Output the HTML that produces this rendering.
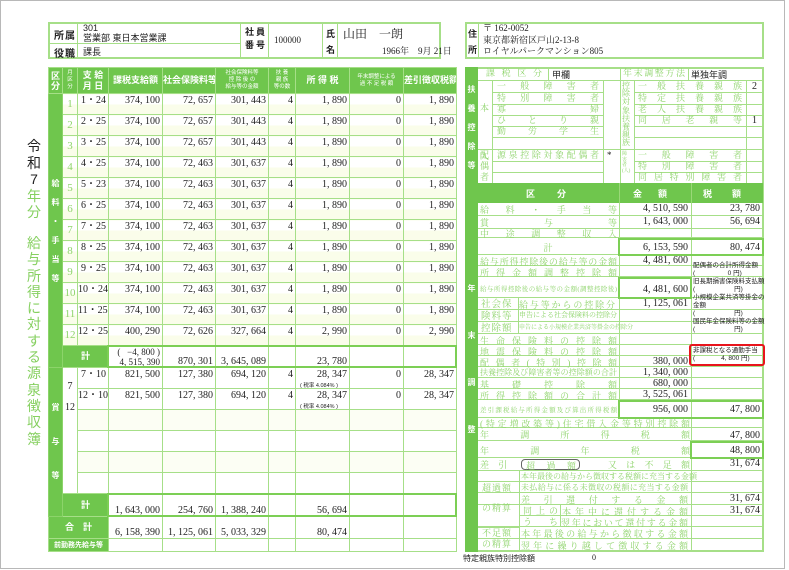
<!DOCTYPE html>
<html><head><meta charset="utf-8">
<style>
*{margin:0;padding:0;box-sizing:border-box}
body{width:789px;height:570px;background:#fff;position:relative;overflow:hidden;font-family:"Liberation Serif","Noto Serif CJK SC",serif;color:#222}
.frame{position:absolute;left:0;top:0;width:785px;height:569px;border:1px solid #b8b8b8}
.a{position:absolute}
.g{color:#8fd46c}
.hb{position:absolute;border:1px solid #a6df88}
.gl{background:#6fc64d;color:#fff}
table{border-collapse:collapse;table-layout:fixed;position:absolute}
td{border:1px solid #a6df88;font-size:10px;vertical-align:top;text-align:right;padding:1px 2px 0 0;white-space:nowrap;overflow:hidden;line-height:11px}
td.h{background:#6fc64d;color:#fff;text-align:center;vertical-align:middle;font-family:"Liberation Sans","Noto Sans CJK JP",sans-serif;font-size:9px;padding:0;font-weight:bold}
td.hs{font-size:5.5px;line-height:7px;font-weight:normal}
td.m{color:#8fd46c;text-align:center;vertical-align:middle;padding:0;font-size:11px;background:#fff}
tr.r td{background:linear-gradient(#fff 50%,#fafdea 50%)}
td.grn{background:#6fc64d!important;border-color:#8cd46a}
.thick{position:absolute;border:2px solid #7ccf55}
.rw{position:absolute;left:478px;width:285px;border-bottom:1px solid #a6df88;font-size:9px}
.rw .l{position:absolute;left:2px;width:137px;top:0;color:#8fd46c;text-align:justify;text-align-last:justify;font-family:"Liberation Serif","Noto Serif CJK JP",serif;white-space:nowrap}
.rw .v1{position:absolute;left:141px;width:72px;border-left:1px solid #a6df88;height:100%;text-align:right;padding-right:3px;font-size:10px}
.rw .v2{position:absolute;left:213px;width:72px;border-left:1px solid #a6df88;height:100%;text-align:right;padding-right:3px;font-size:10px}
.tl{position:absolute;color:#8fd46c;font-size:9px;text-align:justify;text-align-last:justify;white-space:nowrap;line-height:11px}
.ln{position:absolute;background:#a6df88}
.note{position:absolute;left:693px;font-family:"Liberation Sans","Noto Sans CJK JP",sans-serif;font-size:6.5px;line-height:8px;color:#222}
</style></head><body>
<div class="frame"></div>

<!-- header box -->
<div class="hb" style="left:48px;top:22px;width:393px;height:37px;border-width:2px"></div>
<div class="hb" style="left:465px;top:22px;width:299px;height:37px;border-width:2px"></div>
<div class="ln" style="left:48px;top:43px;width:192px;height:1px"></div>
<div class="ln" style="left:77px;top:22px;width:1px;height:37px"></div>
<div class="ln" style="left:240px;top:22px;width:1px;height:37px"></div>
<div class="ln" style="left:268px;top:22px;width:1px;height:37px"></div>
<div class="ln" style="left:322px;top:22px;width:1px;height:37px"></div>
<div class="ln" style="left:337px;top:22px;width:1px;height:37px"></div>
<div class="ln" style="left:478px;top:22px;width:1px;height:37px"></div>
<div class="a" style="left:54px;top:27px;font-size:10px;font-family:'Liberation Sans','Noto Sans CJK JP',sans-serif;font-weight:bold;letter-spacing:1px">所属</div>
<div class="a" style="left:54px;top:45px;font-size:10px;font-family:'Liberation Sans','Noto Sans CJK JP',sans-serif;font-weight:bold;letter-spacing:1px">役職</div>
<div class="a" style="left:83px;top:23px;font-size:9px;line-height:10px;font-family:'Liberation Sans','Noto Sans CJK JP',sans-serif">301<br>営業部 東日本営業課</div>
<div class="a" style="left:83px;top:45px;font-size:9px;font-family:'Liberation Sans','Noto Sans CJK JP',sans-serif">課長</div>
<div class="a" style="left:245px;top:26px;font-size:9px;line-height:13px;font-family:'Liberation Sans','Noto Sans CJK JP',sans-serif;font-weight:bold;letter-spacing:2px">社員<br>番号</div>
<div class="a" style="left:274px;top:35px;font-size:9px">100000</div>
<div class="a" style="left:326px;top:26px;font-size:9px;line-height:16px;font-family:'Liberation Sans','Noto Sans CJK JP',sans-serif;font-weight:bold">氏<br>名</div>
<div class="a" style="left:343px;top:25px;font-size:12px;font-family:'Liberation Serif','Noto Serif CJK JP',serif">山田　一朗</div>
<div class="a" style="left:382px;top:44px;font-size:9px;font-family:'Liberation Serif','Noto Serif CJK JP',serif">1966年　9月 21日</div>
<div class="a" style="left:468px;top:26px;font-size:9px;line-height:16px;font-family:'Liberation Sans','Noto Sans CJK JP',sans-serif;font-weight:bold">住<br>所</div>
<div class="a" style="left:483px;top:23px;font-size:9px;line-height:11.5px;font-family:'Liberation Serif','Noto Serif CJK JP',serif">〒 162-0052<br>東京都新宿区戸山2-13-8<br>ロイヤルパークマンション805</div>

<!-- title -->
<div class="a" style="left:26px;top:138px;width:16px;font-size:14px;line-height:16.5px;text-align:center;font-family:'Liberation Sans','Noto Sans CJK JP',sans-serif">令<br>和<br>7<br><span style="color:#86d060">年<br>分</span></div>
<div class="a" style="left:26px;top:235px;width:16px;font-size:14px;line-height:16.3px;text-align:center;font-family:'Liberation Sans','Noto Sans CJK JP',sans-serif;color:#86d060">給<br>与<br>所<br>得<br>に<br>対<br>す<br>る<br>源<br>泉<br>徴<br>収<br>簿</div>

<!-- left table -->
<table style="left:48px;top:67px;width:408px">
<colgroup><col style="width:14px"><col style="width:15px"><col style="width:31px"><col style="width:54px"><col style="width:53px"><col style="width:53px"><col style="width:27px"><col style="width:54px"><col style="width:54px"><col style="width:53px"></colgroup>
<tr style="height:26px"><td class="h" style="font-size:9px;line-height:10px">区<br>分</td><td class="h hs">月<br>区<br>分</td><td class="h" style="font-size:9px;line-height:11px">支 給<br>月 日</td><td class="h">課税支給額</td><td class="h">社会保険料等</td><td class="h hs">社会保険料等<br>控 除 後 の<br>給与等の金額</td><td class="h hs">扶 養<br>親 族<br>等の数</td><td class="h">所 得 税</td><td class="h hs">年末調整による<br>過 不 足 税 額</td><td class="h">差引徴収税額</td></tr>
<tr class="r" style="height:21px"><td class="grn h" rowspan="13" style="vertical-align:middle;font-size:8px;line-height:19px">給<br>料<br>・<br>手<br>当<br>等</td><td class="m">1</td><td>1・24</td><td>374, 100</td><td>72, 657</td><td>301, 443</td><td>4</td><td>1, 890</td><td>0</td><td>1, 890</td></tr>
<tr class="r" style="height:21px"><td class="m">2</td><td>2・25</td><td>374, 100</td><td>72, 657</td><td>301, 443</td><td>4</td><td>1, 890</td><td>0</td><td>1, 890</td></tr>
<tr class="r" style="height:21px"><td class="m">3</td><td>3・25</td><td>374, 100</td><td>72, 657</td><td>301, 443</td><td>4</td><td>1, 890</td><td>0</td><td>1, 890</td></tr>
<tr class="r" style="height:21px"><td class="m">4</td><td>4・25</td><td>374, 100</td><td>72, 463</td><td>301, 637</td><td>4</td><td>1, 890</td><td>0</td><td>1, 890</td></tr>
<tr class="r" style="height:21px"><td class="m">5</td><td>5・23</td><td>374, 100</td><td>72, 463</td><td>301, 637</td><td>4</td><td>1, 890</td><td>0</td><td>1, 890</td></tr>
<tr class="r" style="height:21px"><td class="m">6</td><td>6・25</td><td>374, 100</td><td>72, 463</td><td>301, 637</td><td>4</td><td>1, 890</td><td>0</td><td>1, 890</td></tr>
<tr class="r" style="height:21px"><td class="m">7</td><td>7・25</td><td>374, 100</td><td>72, 463</td><td>301, 637</td><td>4</td><td>1, 890</td><td>0</td><td>1, 890</td></tr>
<tr class="r" style="height:21px"><td class="m">8</td><td>8・25</td><td>374, 100</td><td>72, 463</td><td>301, 637</td><td>4</td><td>1, 890</td><td>0</td><td>1, 890</td></tr>
<tr class="r" style="height:21px"><td class="m">9</td><td>9・25</td><td>374, 100</td><td>72, 463</td><td>301, 637</td><td>4</td><td>1, 890</td><td>0</td><td>1, 890</td></tr>
<tr class="r" style="height:21px"><td class="m">10</td><td>10・24</td><td>374, 100</td><td>72, 463</td><td>301, 637</td><td>4</td><td>1, 890</td><td>0</td><td>1, 890</td></tr>
<tr class="r" style="height:21px"><td class="m">11</td><td>11・25</td><td>374, 100</td><td>72, 463</td><td>301, 637</td><td>4</td><td>1, 890</td><td>0</td><td>1, 890</td></tr>
<tr class="r" style="height:21px"><td class="m">12</td><td>12・25</td><td>400, 290</td><td>72, 626</td><td>327, 664</td><td>4</td><td>2, 990</td><td>0</td><td>2, 990</td></tr>
<tr style="height:22px"><td class="h" colspan="2">計</td><td style="font-size:9px;line-height:10px;vertical-align:bottom">( &nbsp; −4, 800 )<br>4, 515, 390</td><td style="vertical-align:bottom">870, 301</td><td style="vertical-align:bottom">3, 645, 089</td><td></td><td style="vertical-align:bottom">23, 780</td><td></td><td></td></tr>
<tr style="height:21px"><td class="grn h" rowspan="7" style="vertical-align:middle;font-size:8px;line-height:34px">賞<br>与<br>等</td><td rowspan="6" style="text-align:center;padding:0;line-height:21px;vertical-align:top;padding-top:8px">7<br>12</td><td>7・10</td><td>821, 500</td><td>127, 380</td><td>694, 120</td><td>4</td><td>28, 347</td><td>0</td><td>28, 347</td></tr>
<tr style="height:21px"><td>12・10</td><td>821, 500</td><td>127, 380</td><td>694, 120</td><td>4</td><td>28, 347</td><td>0</td><td>28, 347</td></tr>
<tr style="height:21px;background:#fcfef4"><td></td><td></td><td></td><td></td><td></td><td></td><td></td><td></td></tr>
<tr style="height:21px"><td></td><td></td><td></td><td></td><td></td><td></td><td></td><td></td></tr>
<tr style="height:21px;background:#fcfef4"><td></td><td></td><td></td><td></td><td></td><td></td><td></td><td></td></tr>
<tr style="height:21px"><td></td><td></td><td></td><td></td><td></td><td></td><td></td><td></td></tr>
<tr style="height:23px"><td class="h" colspan="2">計</td><td style="vertical-align:bottom">1, 643, 000</td><td style="vertical-align:bottom">254, 760</td><td style="vertical-align:bottom">1, 388, 240</td><td></td><td style="vertical-align:bottom">56, 694</td><td></td><td></td></tr>
<tr style="height:22px"><td class="h" colspan="3">合　計</td><td style="vertical-align:bottom">6, 158, 390</td><td style="vertical-align:bottom">1, 125, 061</td><td style="vertical-align:bottom">5, 033, 329</td><td></td><td style="vertical-align:bottom">80, 474</td><td></td><td></td></tr>
<tr style="height:13px"><td class="h" colspan="3" style="font-size:7px">前勤務先給与等</td><td></td><td></td><td></td><td></td><td></td><td></td><td></td></tr>
</table>
<div class="a" style="left:300px;top:381px;font-size:5.5px;font-family:'Liberation Sans','Noto Sans CJK JP',sans-serif">( 税率 4.084% )</div>
<div class="a" style="left:300px;top:402px;font-size:5.5px;font-family:'Liberation Sans','Noto Sans CJK JP',sans-serif">( 税率 4.084% )</div>
<div class="thick" style="left:107px;top:345px;width:350px;height:23px"></div>
<div class="thick" style="left:107px;top:493px;width:350px;height:24px"></div>

<!-- right table -->
<div class="hb" style="left:465px;top:67px;width:299px;height:485px;border-width:2px"></div>
<div class="a gl" style="left:465px;top:67px;width:13px;height:485px"></div>
<div class="a" style="left:465px;top:80px;width:13px;font-size:8px;line-height:19px;color:#fff;text-align:center;font-family:'Liberation Sans','Noto Sans CJK JP',sans-serif;font-weight:bold">扶<br>養<br>控<br>除<br>等</div>
<div class="a" style="left:465px;top:265px;width:13px;font-size:8px;line-height:47px;color:#fff;text-align:center;font-family:'Liberation Sans','Noto Sans CJK JP',sans-serif;font-weight:bold">年<br>末<br>調<br>整</div>

<!-- top section lines -->
<div class="ln" style="left:478px;top:80px;width:285px;height:1px"></div>
<div class="ln" style="left:548px;top:67px;width:1px;height:13px"></div>
<div class="ln" style="left:620px;top:67px;width:1px;height:116px"></div>
<div class="ln" style="left:688px;top:67px;width:1px;height:13px"></div>
<div class="ln" style="left:492px;top:80px;width:1px;height:103px"></div>
<div class="ln" style="left:603px;top:80px;width:1px;height:103px"></div>
<div class="ln" style="left:634px;top:80px;width:1px;height:103px"></div>
<div class="ln" style="left:746px;top:80px;width:1px;height:103px"></div>
<div class="ln" style="left:478px;top:149px;width:285px;height:1px"></div>
<div class="ln" style="left:492px;top:92px;width:111px;height:1px"></div>
<div class="ln" style="left:492px;top:104px;width:111px;height:1px"></div>
<div class="ln" style="left:492px;top:115px;width:111px;height:1px"></div>
<div class="ln" style="left:492px;top:126px;width:111px;height:1px"></div>
<div class="ln" style="left:492px;top:137px;width:111px;height:1px"></div>
<div class="ln" style="left:492px;top:161px;width:111px;height:1px"></div>
<div class="ln" style="left:492px;top:172px;width:111px;height:1px"></div>
<div class="ln" style="left:634px;top:92px;width:129px;height:1px"></div>
<div class="ln" style="left:634px;top:104px;width:129px;height:1px"></div>
<div class="ln" style="left:634px;top:115px;width:129px;height:1px"></div>
<div class="ln" style="left:634px;top:126px;width:129px;height:1px"></div>
<div class="ln" style="left:634px;top:137px;width:129px;height:1px"></div>
<div class="ln" style="left:634px;top:161px;width:129px;height:1px"></div>
<div class="ln" style="left:634px;top:172px;width:129px;height:1px"></div>

<div class="tl" style="left:486px;top:68px;width:56px">課税区分</div>
<div class="a" style="left:552px;top:68px;font-size:9px;font-family:'Liberation Sans','Noto Sans CJK JP',sans-serif">甲欄</div>
<div class="tl" style="left:623px;top:68px;width:62px">年末調整方法</div>
<div class="a" style="left:691px;top:68px;font-size:9px;font-family:'Liberation Sans','Noto Sans CJK JP',sans-serif">単独年調</div>
<div class="a g" style="left:480px;top:84px;font-size:9px;line-height:48px">本<br>人</div>
<div class="tl" style="left:497px;top:81px;width:102px">一般障害者</div>
<div class="tl" style="left:497px;top:93px;width:102px">特別障害者</div>
<div class="tl" style="left:497px;top:104px;width:102px">寡婦</div>
<div class="tl" style="left:497px;top:115px;width:102px">ひとり親</div>
<div class="tl" style="left:497px;top:126px;width:102px">勤労学生</div>
<div class="a g" style="left:480px;top:150px;font-size:9px;line-height:11px">配<br>偶<br>者</div>
<div class="tl" style="left:497px;top:150px;width:102px">源泉控除対象配偶者</div>
<div class="a" style="left:607px;top:150px;font-size:9px">*</div>
<div class="a g" style="left:622px;top:82px;font-size:8px;line-height:8.2px;width:11px">控<br>除<br>対<br>象<br>扶<br>養<br>親<br>族</div>
<div class="a g" style="left:622px;top:152px;font-size:5px;line-height:5.5px;width:11px">障<br>害<br>者<br>(人)</div>
<div class="tl" style="left:638px;top:81px;width:104px">一般扶養親族</div>
<div class="tl" style="left:638px;top:93px;width:104px">特定扶養親族</div>
<div class="tl" style="left:638px;top:104px;width:104px">老人扶養親族</div>
<div class="tl" style="left:638px;top:115px;width:104px">同居老親等</div>
<div class="tl" style="left:638px;top:150px;width:104px">一般障害者</div>
<div class="tl" style="left:638px;top:161px;width:104px">特別障害者</div>
<div class="tl" style="left:638px;top:172px;width:104px">同居特別障害者</div>
<div class="a" style="left:752px;top:81px;font-size:10px">2</div>
<div class="a" style="left:752px;top:115px;font-size:10px">1</div>

<!-- 区分 header -->
<div class="a gl" style="left:478px;top:183px;width:285px;height:20px;font-family:'Liberation Sans','Noto Sans CJK JP',sans-serif;font-size:9px;font-weight:bold">
<span class="a" style="left:48px;top:4px;letter-spacing:22px">区分</span>
<span class="a" style="left:155px;top:4px;letter-spacing:16px">金額</span>
<span class="a" style="left:225px;top:4px;letter-spacing:20px">税額</span></div>
<div class="ln" style="left:619px;top:183px;width:1px;height:20px;background:#9ad878"></div>
<div class="ln" style="left:691px;top:183px;width:1px;height:20px;background:#9ad878"></div>

<div class="rw" style="top:203px;height:13px"><div class="l">給料・手当等</div><div class="v1">4, 510, 590</div><div class="v2">23, 780</div></div>
<div class="rw" style="top:216px;height:13px"><div class="l">賞与等</div><div class="v1">1, 643, 000</div><div class="v2">56, 694</div></div>
<div class="rw" style="top:229px;height:9px"><div class="l" style="top:-2px">中途調整収入</div><div class="v1"></div><div class="v2"></div></div>
<div class="rw" style="top:238px;height:17px"><div class="l" style="left:60px;width:20px;text-align:center;text-align-last:center;top:3px">計</div><div class="v1" style="padding-top:4px">6, 153, 590</div><div class="v2" style="padding-top:4px">80, 474</div></div>
<div class="rw" style="top:255px;height:11px"><div class="l">給与所得控除後の給与等の金額</div><div class="v1">4, 481, 600</div><div class="v2"></div></div>
<div class="rw" style="top:266px;height:11px"><div class="l">所得金額調整控除額</div><div class="v1"></div><div class="v2"></div></div>
<div class="rw" style="top:277px;height:21px"><div class="l" style="font-size:6.5px;top:7px">給与所得控除後の給与等の金額(調整控除後)</div><div class="v1" style="padding-top:7px">4, 481, 600</div><div class="v2"></div></div>
<div class="rw" style="top:298px;height:12px"><div class="l" style="left:41px;width:96px">給与等からの控除分</div><div class="v1">1, 125, 061</div><div class="v2"></div></div>
<div class="rw" style="top:310px;height:12px"><div class="l" style="left:41px;width:96px;font-size:7px">申告による社会保険料の控除分</div><div class="v1"></div><div class="v2"></div></div>
<div class="rw" style="top:322px;height:12px"><div class="l" style="left:41px;width:96px;font-size:6px">申告による小規模企業共済等掛金の控除分</div><div class="v1"></div><div class="v2"></div></div>
<div class="ln" style="left:518px;top:298px;width:1px;height:36px"></div>
<div class="a g" style="left:481px;top:299px;font-size:9.5px;line-height:12px;letter-spacing:1px">社会保<br>険料等<br>控除額</div>
<div class="rw" style="top:334px;height:11px"><div class="l">生命保険料の控除額</div><div class="v1"></div><div class="v2"></div></div>
<div class="rw" style="top:345px;height:11px"><div class="l">地震保険料の控除額</div><div class="v1"></div><div class="v2"></div></div>
<div class="rw" style="top:356px;height:11px"><div class="l">配偶者(特別)控除額</div><div class="v1">380, 000</div><div class="v2"></div></div>
<div class="rw" style="top:367px;height:11px"><div class="l" style="font-size:8px">扶養控除及び障害者等の控除額の合計</div><div class="v1">1, 340, 000</div><div class="v2"></div></div>
<div class="rw" style="top:378px;height:11px"><div class="l">基礎控除額</div><div class="v1">680, 000</div><div class="v2"></div></div>
<div class="rw" style="top:389px;height:11px"><div class="l">所得控除額の合計額</div><div class="v1">3, 525, 061</div><div class="v2"></div></div>
<div class="rw" style="top:400px;height:18px"><div class="l" style="font-size:6.5px;top:5px">差引課税給与所得金額及び算出所得税額</div><div class="v1" style="padding-top:4px">956, 000</div><div class="v2" style="padding-top:4px">47, 800</div></div>
<div class="rw" style="top:418px;height:10px"><div class="l" style="width:210px;top:-1px">(特定増改築等)住宅借入金等特別控除額</div><div class="v2"></div></div>
<div class="rw" style="top:428px;height:13px"><div class="l" style="width:210px">年調所得税額</div><div class="v2" style="padding-top:2px">47, 800</div></div>
<div class="rw" style="top:441px;height:17px"><div class="l" style="width:210px;top:3px">年調年税額</div><div class="v2" style="padding-top:4px">48, 800</div></div>
<div class="rw" style="top:458px;height:13px"><div class="l" style="width:210px">差引　　　　　又は不足額</div><div class="v2">31, 674</div></div>
<div class="a" style="left:521px;top:459px;width:59px;height:11px;border:1px solid #666;border-radius:4px"></div>
<div class="a g" style="left:526px;top:459px;width:50px;font-size:9px;text-align:justify;text-align-last:justify">超過額</div>
<div class="rw" style="top:471px;height:11px"><div class="l" style="left:43px;width:167px;font-size:8px">本年最後の給与から徴収する税額に充当する金額</div><div class="v2"></div></div>
<div class="rw" style="top:482px;height:11px"><div class="l" style="left:43px;width:167px;font-size:8px">未払給与に係る未徴収の税額に充当する金額</div><div class="v2"></div></div>
<div class="rw" style="top:493px;height:12px"><div class="l" style="left:43px;width:167px">差引還付する金額</div><div class="v2">31, 674</div></div>
<div class="rw" style="top:505px;height:11px;left:519px;width:244px"><div class="l" style="left:43px;width:126px">本年中に還付する金額</div><div class="v2" style="left:172px">31, 674</div></div>
<div class="rw" style="top:516px;height:11px"><div class="l" style="left:83px;width:127px">翌年において還付する金額</div><div class="v2"></div></div>
<div class="rw" style="top:527px;height:12px"><div class="l" style="left:43px;width:167px">本年最後の給与から徴収する金額</div><div class="v2"></div></div>
<div class="rw" style="top:539px;height:12px;border-bottom:none"><div class="l" style="left:43px;width:167px">翌年に繰り越して徴収する金額</div><div class="v2"></div></div>
<div class="ln" style="left:519px;top:471px;width:1px;height:80px"></div>
<div class="ln" style="left:560px;top:505px;width:1px;height:22px"></div>
<div class="ln" style="left:478px;top:527px;width:41px;height:1px"></div>
<div class="a g" style="left:482px;top:478px;font-size:9px;line-height:20px;letter-spacing:1px">超過額<br>の精算</div>
<div class="a g" style="left:523px;top:506px;font-size:9px;line-height:11px;letter-spacing:4px">同上の<br>う　ち</div>
<div class="a g" style="left:482px;top:528px;font-size:9px;line-height:11px;letter-spacing:1px">不足額<br>の精算</div>

<!-- notes -->
<div class="ln" style="left:691px;top:255px;width:1px;height:101px"></div>
<div class="note" style="top:262px">配偶者の合計所得金額<br>(　　　　　0 円)<br>旧長期損害保険料支払額<br>(　　　　　　円)<br>小規模企業共済等掛金の<br>金額<br>(　　　　　　円)<br>国民年金保険料等の金額<br>(　　　　　　円)</div>
<div class="a" style="left:689px;top:344px;width:76px;height:22px;border:2px solid #e8141c;border-radius:3px"></div>
<div class="note" style="top:347px">非課税となる通勤手当<br>(　　　　4, 800 円)</div>

<div class="thick" style="left:618px;top:238px;width:146px;height:18px"></div>
<div class="thick" style="left:618px;top:277px;width:74px;height:22px"></div>
<div class="thick" style="left:618px;top:400px;width:146px;height:19px"></div>
<div class="thick" style="left:690px;top:441px;width:74px;height:18px"></div>

<div class="a" style="left:463px;top:553px;font-size:8px;font-family:'Liberation Sans','Noto Sans CJK JP',sans-serif">特定親族特別控除額</div>
<div class="a" style="left:592px;top:553px;font-size:8px">0</div>
</body></html>
